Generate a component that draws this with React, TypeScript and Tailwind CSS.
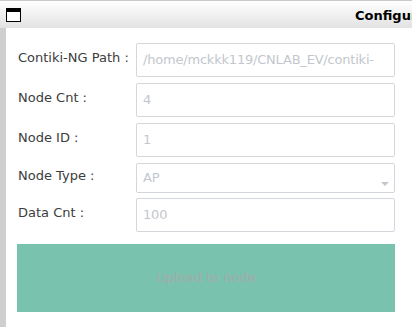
import React from 'react';

const rows = [
  { label: 'Contiki-NG Path :', value: '/home/mckkk119/CNLAB_EV/contiki-', h: 'h-[34px]' },
  { label: 'Node Cnt :', value: '4', h: 'h-[34px]' },
  { label: 'Node ID :', value: '1', h: 'h-[34px]' },
];

function Field({ label, value, h, select }: { label: string; value: string; h: string; select?: boolean }) {
  return (
    <div className="flex items-center">
      <div className="w-[119px] pl-[1px] text-[13px] text-[#3c3c3c] -mt-[4px]">{label}</div>
      <div className={`relative ${h} w-[259px] rounded-[2px] border border-[#d3d7dc] bg-white flex items-center pl-[6px] pr-[2px] overflow-hidden`}>
        <span className="whitespace-nowrap text-[13px] tracking-[-0.2px] text-[#c3c7cd]">{value}</span>
        {select && (
          <div className="absolute right-[5px] bottom-[6px] w-0 h-0 border-l-[4px] border-r-[4px] border-t-[4px] border-l-transparent border-r-transparent border-t-[#c3c7cd]" />
        )}
      </div>
    </div>
  );
}

export default function App() {
  return (
    <div className="w-[412px] h-[327px] overflow-hidden bg-white font-['DejaVu_Sans',sans-serif]">
      {/* title bar */}
      <div className="relative h-[28px] border-t border-[#c9c9c9] bg-gradient-to-b from-white to-[#e2e2e2] flex items-center">
        <div className="ml-[6px] w-[15px] h-[14px] border-[1.5px] border-t-[4px] border-black bg-white" />
        <div className="absolute left-[355px] top-[5px] text-[13px] font-bold text-black whitespace-nowrap">Configuration</div>
      </div>

      <div className="flex h-[299px]">
        <div className="w-[6px] bg-[#cfcfcf]" />
        <div className="flex flex-col pl-[11px] pt-[15px]">
          <div className="flex flex-col gap-[6px]">
            {rows.map((r) => (
              <Field key={r.label} label={r.label} value={r.value} h={r.h} />
            ))}
          </div>
          <div className="mt-[6px]">
            <Field label="Node Type :" value="AP" h="h-[30px] items-start pt-[4px]" select />
          </div>
          <div className="mt-[5px]">
            <Field label="Data Cnt :" value="100" h="h-[34px]" />
          </div>
          <button className="mt-[12px] h-[68px] w-[378px] bg-[#79c2ad] text-[13px] text-[#a5aba9]">
            Upload to node
          </button>
        </div>
      </div>
    </div>
  );
}
